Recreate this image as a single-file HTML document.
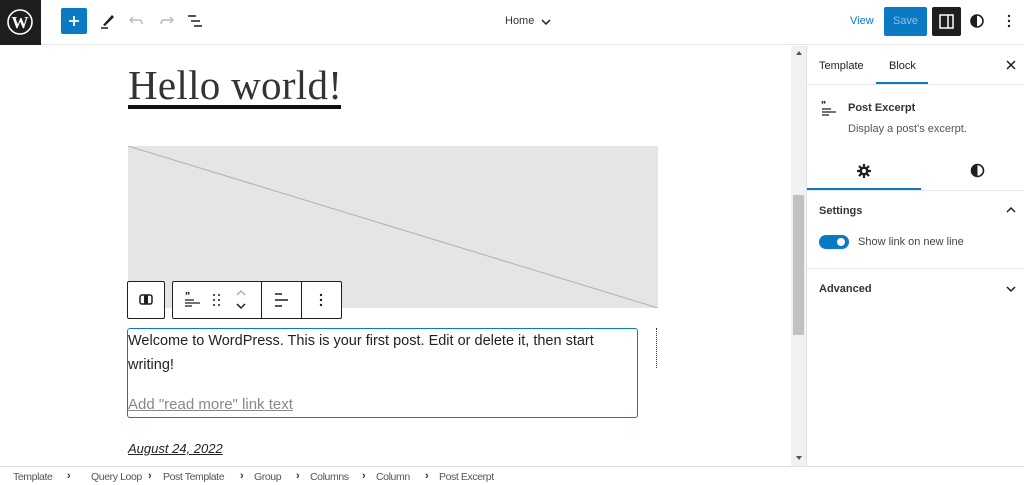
<!DOCTYPE html>
<html><head><meta charset="utf-8"><style>
*{box-sizing:border-box;margin:0;padding:0}
body{width:1024px;height:485px;overflow:hidden;background:#fff;font-family:"Liberation Sans",sans-serif;color:#1e1e1e;position:relative}
.a{position:absolute}
.t{font-size:11px}
.f{position:absolute;top:471px;font-size:10.5px;letter-spacing:-0.4px;color:#555}
.c{position:absolute;top:470px;font-size:11px;color:#333;font-weight:bold}
</style></head><body>
<!-- top bar -->
<div class="a" style="left:0;top:0;width:1024px;height:45px;border-bottom:1px solid #e6e6e6"></div>
<div class="a" style="left:0;top:0;width:41px;height:45px;background:#1e1e1e"></div>
<svg class="a" style="left:6px;top:8px" width="28" height="28" viewBox="0 0 28 28"><circle cx="14" cy="14" r="12" fill="none" stroke="#fff" stroke-width="1.6"/><text x="14" y="20" font-size="17" font-family="Liberation Serif" font-weight="bold" fill="#fff" text-anchor="middle">W</text></svg>
<div class="a" style="left:61px;top:8px;width:26px;height:26px;background:#0a7ac4;border-radius:2px"></div>
<svg class="a" style="left:67px;top:14px" width="14" height="14"><path d="M7 2 V12 M2 7 H12" stroke="#fff" stroke-width="1.8"/></svg>
<svg class="a" style="left:100px;top:12px" width="16" height="18"><path d="M3 13 L12 3 L14 5 L5 14 Z" fill="#1e1e1e"/><path d="M1 16 H8" stroke="#1e1e1e" stroke-width="1.5"/></svg>
<svg class="a" style="left:129px;top:14px" width="16" height="14"><path d="M4 3 L1 6 L4 9 M1 6 H10 Q13 6 13 10" fill="none" stroke="#bbb" stroke-width="1.4"/></svg>
<svg class="a" style="left:158px;top:14px" width="16" height="14"><path d="M12 3 L15 6 L12 9 M15 6 H6 Q3 6 3 10" fill="none" stroke="#bbb" stroke-width="1.4"/></svg>
<svg class="a" style="left:186px;top:14px" width="18" height="14"><path d="M2 2 H10 M5 7 H14 M8 12 H16" stroke="#1e1e1e" stroke-width="1.5"/></svg>
<div class="a t" style="left:505px;top:15px;color:#333">Home</div>
<svg class="a" style="left:541px;top:18px" width="10" height="8"><path d="M1 2 L5 6 L9 2" fill="none" stroke="#1e1e1e" stroke-width="1.5"/></svg>
<div class="a t" style="left:850px;top:15px;color:#0a7ac4">View</div>
<div class="a t" style="left:884px;top:7px;width:43px;height:29px;background:#0a7ac4;color:#8cc3e8;line-height:29px;text-align:center;border-radius:2px">Save</div>
<div class="a" style="left:932px;top:7px;width:29px;height:29px;background:#1e1e1e;border-radius:2px"></div>
<svg class="a" style="left:938px;top:13px" width="17" height="17"><rect x="2" y="2" width="13" height="13" fill="none" stroke="#fff" stroke-width="1.5"/><path d="M10 2 V15" stroke="#fff" stroke-width="1.5"/></svg>
<svg class="a" style="left:969px;top:13px" width="16" height="16"><circle cx="8" cy="8" r="6" fill="none" stroke="#1e1e1e" stroke-width="1.6"/><path d="M8 2 A6 6 0 0 0 8 14Z" fill="#1e1e1e"/></svg>
<svg class="a" style="left:1006px;top:13px" width="6" height="16"><circle cx="3" cy="3" r="1.2" fill="#1e1e1e"/><circle cx="3" cy="8" r="1.2" fill="#1e1e1e"/><circle cx="3" cy="13" r="1.2" fill="#1e1e1e"/></svg>

<!-- canvas -->
<div class="a" style="left:128px;top:61px;font-family:'Liberation Serif',serif;font-size:41px;color:#333;letter-spacing:0.3px">Hello world!</div>
<div class="a" style="left:128px;top:105px;width:213px;height:4px;background:#111"></div>
<div class="a" style="left:128px;top:146px;width:530px;height:162px;background:#e5e5e5;overflow:hidden">
<svg width="530" height="162"><line x1="0" y1="0" x2="530" y2="162" stroke="#b0b0b0" stroke-width="1"/></svg></div>
<!-- block toolbar -->
<div class="a" style="left:127px;top:281px;width:38px;height:38px;border:1px solid #1e1e1e;border-radius:2px;background:#fff"></div>
<svg class="a" style="left:139px;top:294px" width="14" height="11"><rect x="1" y="1" width="12" height="9" rx="2" fill="none" stroke="#1e1e1e" stroke-width="1.5"/><rect x="5" y="1" width="4" height="9" fill="#1e1e1e"/></svg>
<div class="a" style="left:172px;top:281px;width:170px;height:38px;border:1px solid #1e1e1e;border-radius:2px;background:#fff"></div>
<div class="a" style="left:261px;top:281px;width:1px;height:38px;background:#1e1e1e"></div>
<div class="a" style="left:301px;top:281px;width:1px;height:38px;background:#1e1e1e"></div>
<svg class="a" style="left:184px;top:291px" width="18" height="16"><text x="1" y="8" font-size="10" font-weight="bold" font-family="Liberation Serif">”</text><path d="M1 9 H10 M1 12 H16 M1 15 H8" stroke="#1e1e1e" stroke-width="1.2"/></svg>
<svg class="a" style="left:212px;top:293px" width="10" height="14"><g fill="#1e1e1e"><circle cx="2" cy="2" r="1"/><circle cx="7" cy="2" r="1"/><circle cx="2" cy="7" r="1"/><circle cx="7" cy="7" r="1"/><circle cx="2" cy="12" r="1"/><circle cx="7" cy="12" r="1"/></g></svg>
<svg class="a" style="left:235px;top:290px" width="12" height="20"><path d="M2 5 L6 1 L10 5" fill="none" stroke="#aaa" stroke-width="1.3"/><path d="M2 14 L6 18 L10 14" fill="none" stroke="#1e1e1e" stroke-width="1.5"/></svg>
<svg class="a" style="left:274px;top:292px" width="16" height="16"><path d="M1 2 H8 M1 8 H14 M1 14 H8" stroke="#1e1e1e" stroke-width="1.5"/></svg>
<svg class="a" style="left:318px;top:292px" width="6" height="16"><circle cx="3" cy="3" r="1.2" fill="#1e1e1e"/><circle cx="3" cy="8" r="1.2" fill="#1e1e1e"/><circle cx="3" cy="13" r="1.2" fill="#1e1e1e"/></svg>
<!-- excerpt -->
<div class="a" style="left:127px;top:328px;width:511px;height:90px;border:1.5px solid #0a7ac4;border-radius:3px"></div>
<div class="a" style="left:128px;top:329px;font-size:14.5px;line-height:24px;color:#222;width:500px">Welcome to WordPress. This is your first post. Edit or delete it, then start writing!</div>
<div class="a" style="left:128px;top:396px;font-size:15px;color:#888;text-decoration:underline">Add "read more" link text</div>
<div class="a" style="left:656px;top:328px;height:40px;border-left:1px dotted #333"></div>
<div class="a" style="left:128px;top:441px;font-size:13px;font-style:italic;text-decoration:underline;color:#222">August 24, 2022</div>

<!-- scrollbar -->
<div class="a" style="left:791px;top:46px;width:15px;height:420px;background:#f1f1f1"></div>
<div class="a" style="left:793px;top:195px;width:11px;height:140px;background:#c1c1c1"></div>
<svg class="a" style="left:795px;top:50px" width="8" height="6"><path d="M1 5 L4 1 L7 5Z" fill="#555"/></svg>
<svg class="a" style="left:795px;top:455px" width="8" height="6"><path d="M1 1 L4 5 L7 1Z" fill="#555"/></svg>

<!-- sidebar -->
<div class="a" style="left:806px;top:46px;width:218px;height:420px;border-left:1px solid #e0e0e0"></div>
<div class="a t" style="left:819px;top:60px">Template</div>
<div class="a t" style="left:889px;top:60px">Block</div>
<div class="a" style="left:876px;top:82px;width:52px;height:2px;background:#0a7ac4"></div>
<svg class="a" style="left:1006px;top:60px" width="10" height="10"><path d="M1 1 L9 9 M9 1 L1 9" stroke="#1e1e1e" stroke-width="1.5"/></svg>
<div class="a" style="left:807px;top:84px;width:217px;height:1px;background:#e6e6e6"></div>
<svg class="a" style="left:821px;top:100px" width="16" height="16"><text x="0" y="8" font-size="10" font-weight="bold" font-family="Liberation Serif">”</text><path d="M1 9 H10 M1 12 H15 M1 15 H8" stroke="#1e1e1e" stroke-width="1.2"/></svg>
<div class="a t" style="left:848px;top:102px;font-weight:bold;color:#333">Post Excerpt</div>
<div class="a t" style="left:848px;top:123px;color:#555">Display a post's excerpt.</div>
<svg class="a" style="left:857px;top:164px" width="14" height="14"><circle cx="7" cy="7" r="4.5" fill="#1e1e1e"/><path d="M7 0 V14 M0 7 H14 M2 2 L12 12 M12 2 L2 12" stroke="#1e1e1e" stroke-width="2.2"/><circle cx="7" cy="7" r="2" fill="#fff"/></svg>
<svg class="a" style="left:970px;top:163px" width="15" height="15"><circle cx="7.5" cy="7.5" r="6" fill="none" stroke="#1e1e1e" stroke-width="1.6"/><path d="M7.5 1.5 A6 6 0 0 0 7.5 13.5Z" fill="#1e1e1e"/></svg>
<div class="a" style="left:807px;top:188px;width:114px;height:2px;background:#0a7ac4"></div>
<div class="a" style="left:807px;top:190px;width:217px;height:1px;background:#e6e6e6"></div>
<div class="a t" style="left:819px;top:205px;font-weight:bold;color:#333">Settings</div>
<svg class="a" style="left:1006px;top:206px" width="10" height="7"><path d="M1 6 L5 2 L9 6" fill="none" stroke="#1e1e1e" stroke-width="1.5"/></svg>
<div class="a" style="left:819px;top:235px;width:30px;height:14px;border-radius:7px;background:#0a7ac4"></div>
<div class="a" style="left:837px;top:238px;width:8px;height:8px;border-radius:50%;background:#fff"></div>
<div class="a t" style="left:858px;top:236px;color:#444">Show link on new line</div>
<div class="a" style="left:807px;top:268px;width:217px;height:1px;background:#e6e6e6"></div>
<div class="a t" style="left:819px;top:283px;font-weight:bold;color:#333">Advanced</div>
<svg class="a" style="left:1006px;top:286px" width="10" height="7"><path d="M1 1 L5 5 L9 1" fill="none" stroke="#1e1e1e" stroke-width="1.5"/></svg>

<!-- footer -->
<div class="a" style="left:0;top:466px;width:1024px;height:19px;border-top:1px solid #e0e0e0;background:#fff"></div>
<div class="f" style="left:13px">Template</div><div class="c" style="left:67px">›</div>
<div class="f" style="left:91px">Query Loop</div><div class="c" style="left:148px">›</div>
<div class="f" style="left:163px">Post Template</div><div class="c" style="left:240px">›</div>
<div class="f" style="left:254px">Group</div><div class="c" style="left:296px">›</div>
<div class="f" style="left:310px">Columns</div><div class="c" style="left:362px">›</div>
<div class="f" style="left:376px">Column</div><div class="c" style="left:425px">›</div>
<div class="f" style="left:439px">Post Excerpt</div>
</body></html>
